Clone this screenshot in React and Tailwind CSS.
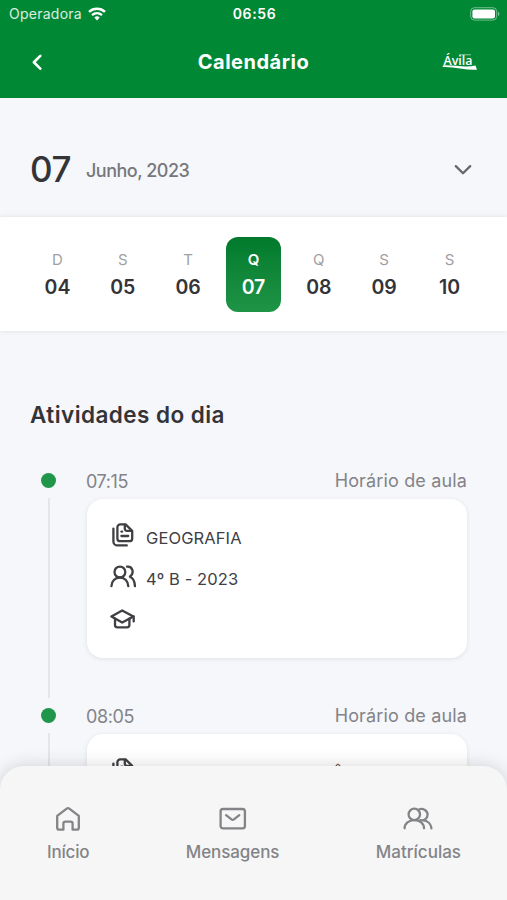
const week = [
  { letter: 'D', day: '04' },
  { letter: 'S', day: '05' },
  { letter: 'T', day: '06' },
  { letter: 'Q', day: '07', active: true },
  { letter: 'Q', day: '08' },
  { letter: 'S', day: '09' },
  { letter: 'S', day: '10' },
];

const activities = [
  { time: '07:15', subject: 'GEOGRAFIA', group: '4º B - 2023' },
  { time: '08:05', subject: 'LABORATORIOS DAS CIÊNCIAS', group: '4º B - 2023' },
];

function Icon({ children, className, viewBox = '0 0 26 26', strokeWidth = 2.1 }) {
  return (
    <svg
      className={className}
      viewBox={viewBox}
      fill="none"
      stroke="currentColor"
      strokeWidth={strokeWidth}
      strokeLinecap="round"
      strokeLinejoin="round"
    >
      {children}
    </svg>
  );
}

function StatusBar() {
  return (
    <div className="grid h-[27px] grid-cols-3 items-center pl-[9px] pr-[7px] text-[14px]">
      <div className="flex items-center gap-1.5">
        <span className="tracking-[0.25px] text-white/85">Operadora</span>
        <svg className="h-[14px] w-[18px]" viewBox="0 0 18 14" fill="none" stroke="white">
          <path d="M1 4.8C5.5.7 12.5.7 17 4.8" strokeWidth="2.5" />
          <path d="M4 8.1c2.9-2.5 7.1-2.5 10 0" strokeWidth="2.3" />
          <path d="M6.3 10.5a4.2 4.2 0 0 1 5.4 0L9 13.4z" fill="white" stroke="none" />
        </svg>
      </div>
      <span className="text-center text-[14px] font-semibold tracking-[0.6px]">06:56</span>
      <svg className="h-[14px] w-[30px] justify-self-end" viewBox="0 0 30 14">
        <rect x="0.7" y="0.7" width="26" height="12.4" rx="3.8" fill="none" stroke="white" strokeOpacity=".45" />
        <rect x="2.4" y="2.4" width="22.6" height="9" rx="2.2" fill="white" />
        <path d="M28 4.8c1.8.7 1.8 3.6 0 4.3z" fill="white" fillOpacity=".5" />
      </svg>
    </div>
  );
}

function Logo() {
  return (
    <svg className="h-[22px] w-[36px] overflow-visible" viewBox="0 0 36 22" fill="white">
      <text
        x="1.5"
        y="13.6"
        fontFamily="Open Sans, sans-serif"
        fontSize="12"
        fontWeight="600"
        textLength="29"
        lengthAdjust="spacingAndGlyphs"
      >
        Ávila
      </text>
      <path d="M17 3.4h12v.8H17z" opacity=".7" />
      <path d="M1 14.4c11-.6 22 2.6 32.5.2l1.5 4.2C24 19.4 12 15.4.5 16z" />
    </svg>
  );
}

function Header() {
  return (
    <header className="h-[98px] shrink-0 bg-[#018834] text-white">
      <StatusBar />
      <div className="grid h-[69px] grid-cols-[80px_1fr_80px] items-center">
        <Icon className="ml-[30px] h-[16px] w-[16px]" viewBox="0 0 14 14" strokeWidth={2.3}>
          <path d="M9 1.6 3.4 7.2 9 12.8" />
        </Icon>
        <h1 className="text-center text-[20px] font-bold tracking-[0.5px]">Calendário</h1>
        <div className="flex justify-end pr-[29px]">
          <Logo />
        </div>
      </div>
    </header>
  );
}

function Day({ letter, day, active }) {
  return (
    <div
      className={
        active
          ? 'flex h-[75px] w-[55px] flex-col items-center rounded-xl bg-linear-to-b from-[#017a2c] to-[#1e9447] pt-[12px] text-white'
          : 'flex h-[75px] w-[55px] flex-col items-center pt-[12px] text-[#343438]'
      }
    >
      <span
        className={
          active
            ? 'text-[15px] leading-[22px] font-semibold'
            : 'text-[15px] leading-[22px] text-[#a0a0a3]'
        }
      >
        {letter}
      </span>
      <span className="mt-[3px] text-[19.5px] leading-[26px] font-semibold">{day}</span>
    </div>
  );
}

function FilesIcon() {
  return (
    <Icon className="h-[26px] w-[26px]" strokeWidth={2.3}>
      <path d="M10.2 2.4h5.4l6.6 6.4v7.6a2.8 2.8 0 0 1-2.8 2.8h-9.2a2.8 2.8 0 0 1-2.8-2.8V5.2a2.8 2.8 0 0 1 2.8-2.8Z" />
      <path d="M14.8 2.8v4a2 2 0 0 0 2 2h5M11.4 9.6h.8M11.4 14h6.8" />
      <path d="M3.4 6.6v12.8a4 4 0 0 0 4 4h9.4" />
    </Icon>
  );
}

function PeopleIcon() {
  return (
    <Icon className="h-[26px] w-[26px]" strokeWidth={2.3}>
      <circle cx="9.9" cy="8" r="5.4" />
      <path d="M1.4 22.2c.1-5 3.7-8.7 8.5-8.7s8.3 3.7 8.4 8.7" />
      <path d="M17 2.7c5.8-.8 7.6 6.6 3 9.8M20 12.7c3.1 1.4 4.8 4.9 4.9 9.5" />
    </Icon>
  );
}

function GraduationIcon() {
  return (
    <Icon className="h-[26px] w-[26px]" strokeWidth={2.3}>
      <path d="M12.2 4.4 23.4 10.4 12.2 16.6 1.4 10.4z" />
      <path d="M5 12.6v6.5c0 1.3 1 2.3 2.3 2.3h9.8c1.3 0 2.3-1 2.3-2.3v-6.5M23.7 10.4v5" />
    </Icon>
  );
}

function Activity({ time, subject, group }) {
  return (
    <div className="flex h-[235px]">
      <div className="flex w-[56px] shrink-0 flex-col items-center pr-[19px]">
        <div className="mt-[6px] h-[15px] w-[15px] shrink-0 rounded-full bg-[#1f9649]" />
        <div className="mt-[10px] h-[200px] w-[2px] shrink-0 bg-[#e5e6e9]" />
      </div>
      <div className="flex-1">
        <div className="flex h-[26px] items-center justify-between text-[18px] text-[#838388]">
          <span className="pt-[2px] tracking-[-0.4px]">{time}</span>
          <span className="tracking-[0.15px]">Horário de aula</span>
        </div>
        <div className="mt-[6px] ml-px flex h-[159px] flex-col gap-4 rounded-2xl bg-white pt-[23px] pl-[23px] text-[16.5px] text-[#404044] shadow-[0_1px_5px_rgba(0,0,0,0.09)]">
          <div className="flex h-[26px] items-center gap-[10px]">
            <FilesIcon />
            <span className="mt-[6px] leading-[24px] tracking-[0.1px] whitespace-nowrap">{subject}</span>
          </div>
          <div className="flex h-[26px] items-center gap-[10px]">
            <PeopleIcon />
            <span className="mt-[4px] leading-[24px] tracking-[0.1px] whitespace-nowrap">{group}</span>
          </div>
          <GraduationIcon />
        </div>
      </div>
    </div>
  );
}

function TabBar() {
  return (
    <nav className="absolute inset-x-0 bottom-0 flex h-[134px] justify-between rounded-t-[24px] bg-[#f6f6f6] px-[46px] pt-[39px] text-[17px] font-medium text-[#838487] shadow-[0_0_18px_rgba(0,0,0,0.16)]">
      <a className="flex flex-col items-center gap-[7px] pl-px">
        <Icon className="h-[28px] w-[28px]" viewBox="0 0 28 28" strokeWidth={2.3}>
          <path d="m3.2 10.8 9.5-7.2a2.1 2.1 0 0 1 2.6 0l9.5 7.2v11.9a2 2 0 0 1-2 2h-4.2v-6.1a2 2 0 0 0-2-2h-5.2a2 2 0 0 0-2 2v6.1H5.2a2 2 0 0 1-2-2Z" />
        </Icon>
        <span className="leading-[24px] tracking-[-0.2px]">Início</span>
      </a>
      <a className="flex flex-col items-center gap-[7px]">
        <Icon className="h-[28px] w-[28px]" viewBox="0 0 28 28" strokeWidth={2.3}>
          <rect x="1.6" y="4" width="24.3" height="19.4" rx="2.4" />
          <path d="m7.1 10.1 5.4 4.3a2 2 0 0 0 2.4 0l5.4-4.3" />
        </Icon>
        <span className="leading-[24px] tracking-[-0.1px]">Mensagens</span>
      </a>
      <a className="flex flex-col items-center gap-[7px]">
        <Icon className="h-[28px] w-[30px]" viewBox="0 0 30 28" strokeWidth={2.3}>
          <circle cx="11.3" cy="9.4" r="5.7" />
          <path d="M1.6 23.3c0-4.6 4.3-8.2 9.7-8.2s9.7 3.6 9.7 8.2" />
          <path d="M15.4 4.9c4-2.5 9.2.4 9.2 4.7 0 3.8-3.5 6.4-7.2 5.5M20.6 15.3c4.4.4 7.4 3.9 7.8 8" />
        </Icon>
        <span className="leading-[24px]">Matrículas</span>
      </a>
    </nav>
  );
}

export default function App() {
  return (
    <div className="relative flex h-[900px] w-full flex-col overflow-hidden bg-[#f5f7fb] font-['Inter',sans-serif]">
      <Header />

      <div className="flex h-[119px] shrink-0 items-center pt-6 pr-[34px] pl-[30px]">
        <span className="w-[56px] text-[35px] font-medium tracking-[-0.5px] text-[#343438]">07</span>
        <span className="pt-px text-[18px] font-medium tracking-[-0.5px] text-[#77777b]">Junho, 2023</span>
        <Icon className="ml-auto h-[20px] w-[20px] text-[#68686c]" viewBox="0 0 20 20" strokeWidth={2.3}>
          <path d="m2.8 6.1 7.2 7.2 7.2-7.2" />
        </Icon>
      </div>

      <div className="h-[114px] shrink-0 bg-white pt-[20px] shadow-[0_0_5px_rgba(0,0,0,0.1)]">
        <div className="flex justify-between px-[30px]">
          {week.map((item) => (
            <Day key={item.day} {...item} />
          ))}
        </div>
      </div>

      <main className="pt-[68px] pr-[40px] pl-[30px]">
        <h2 className="text-[22.5px] leading-[32px] font-semibold tracking-[0.45px] text-[#343438]">
          Atividades do dia
        </h2>
        <div className="mt-[36px]">
          {activities.map((activity) => (
            <Activity key={activity.time} {...activity} />
          ))}
        </div>
      </main>

      <TabBar />
    </div>
  );
}
